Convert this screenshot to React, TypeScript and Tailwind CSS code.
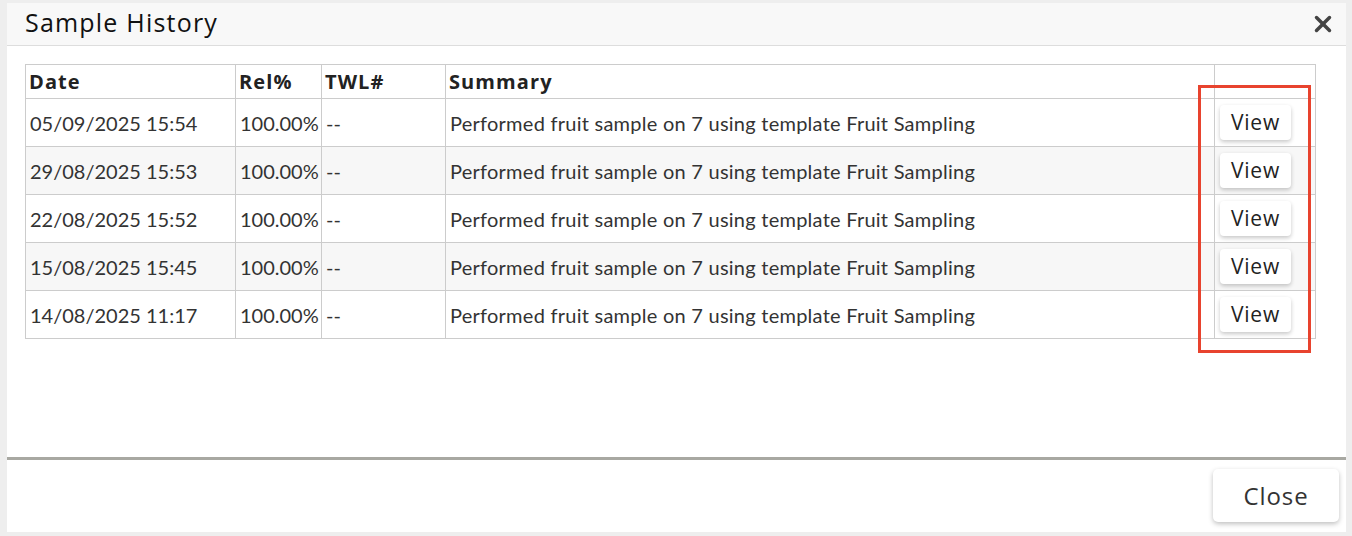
import { X } from 'lucide-react';

const rows = [
  { date: '05/09/2025 15:54', rel: '100.00%', twl: '--', summary: 'Performed fruit sample on 7 using template Fruit Sampling' },
  { date: '29/08/2025 15:53', rel: '100.00%', twl: '--', summary: 'Performed fruit sample on 7 using template Fruit Sampling' },
  { date: '22/08/2025 15:52', rel: '100.00%', twl: '--', summary: 'Performed fruit sample on 7 using template Fruit Sampling' },
  { date: '15/08/2025 15:45', rel: '100.00%', twl: '--', summary: 'Performed fruit sample on 7 using template Fruit Sampling' },
  { date: '14/08/2025 11:17', rel: '100.00%', twl: '--', summary: 'Performed fruit sample on 7 using template Fruit Sampling' },
];

const heading = "font-['Open_Sans',sans-serif]";
const body = "font-['Lato',sans-serif]";

export default function App() {
  return (
    <div className="h-[536px] w-[1352px] bg-[#eeeeee] pt-[3px] pl-[7px] overflow-hidden">
      <div className="flex h-[529px] w-[1339px] flex-col bg-white">
        {/* Header */}
        <div className="flex h-[43px] items-center justify-between border-b border-[#dddddd] bg-[#f8f8f8] pl-[18px] pr-[10px]">
          <h2 className={`${heading} text-[25px] tracking-[1.2px] leading-none text-[#111111] pb-[3px]`}>Sample History</h2>
          <button className="text-[#444444]">
            <X size={26} strokeWidth={3.2} />
          </button>
        </div>

        {/* Body */}
        <div className="flex-1 px-[18px] pt-[18px]">
          <div className="relative">
            <table className="w-[1290px] table-fixed border-collapse text-[#333333]">
              <colgroup>
                <col className="w-[210px]" />
                <col className="w-[86px]" />
                <col className="w-[124px]" />
                <col className="w-[769px]" />
                <col className="w-[101px]" />
              </colgroup>
              <thead>
                <tr className={`${heading} h-[34px] text-left text-[20px] tracking-[1.1px] font-bold text-[#222222]`}>
                  <th className="border border-[#cccccc] px-[3px] align-middle">Date</th>
                  <th className="border border-[#cccccc] px-[3px] align-middle">Rel%</th>
                  <th className="border border-[#cccccc] px-[3px] align-middle">TWL#</th>
                  <th className="border border-[#cccccc] px-[3px] align-middle">Summary</th>
                  <th className="border border-[#cccccc]"></th>
                </tr>
              </thead>
              <tbody className={`${body} text-[20px]`}>
                {rows.map((r, i) => (
                  <tr key={r.date} className={i % 2 === 1 ? 'bg-[#f7f7f7]' : 'bg-white'}>
                    <td className="border border-[#cccccc] px-[4px] py-[6px]">{r.date}</td>
                    <td className="border border-[#cccccc] px-[4px] py-[6px]">{r.rel}</td>
                    <td className="border border-[#cccccc] px-[4px] py-[6px]">{r.twl}</td>
                    <td className="border border-[#cccccc] px-[4px] py-[6px] tracking-[0.25px]">{r.summary}</td>
                    <td className="border border-[#cccccc] pl-[5px] py-[6px]">
                      <button className={`${heading} h-[35px] w-[71px] rounded-[4px] bg-white text-[21px] tracking-[0.8px] text-[#222222] shadow-[0_2px_4px_rgba(0,0,0,0.22)]`}>
                        View
                      </button>
                    </td>
                  </tr>
                ))}
              </tbody>
            </table>
            {/* Highlight annotation */}
            <div className="absolute left-[1173px] top-[21px] h-[268px] w-[113px] border-[3px] border-[#e8432e]" />
          </div>
        </div>

        {/* Footer */}
        <div className="flex h-[75px] items-start justify-end border-t-[3px] border-[#a8a8a2] pt-[9px] pr-[7px]">
          <button className={`${heading} h-[53px] w-[126px] rounded-[5px] bg-white text-[24px] tracking-[0.9px] text-[#333333] shadow-[0_2px_5px_rgba(0,0,0,0.25)]`}>
            Close
          </button>
        </div>
      </div>
    </div>
  );
}
